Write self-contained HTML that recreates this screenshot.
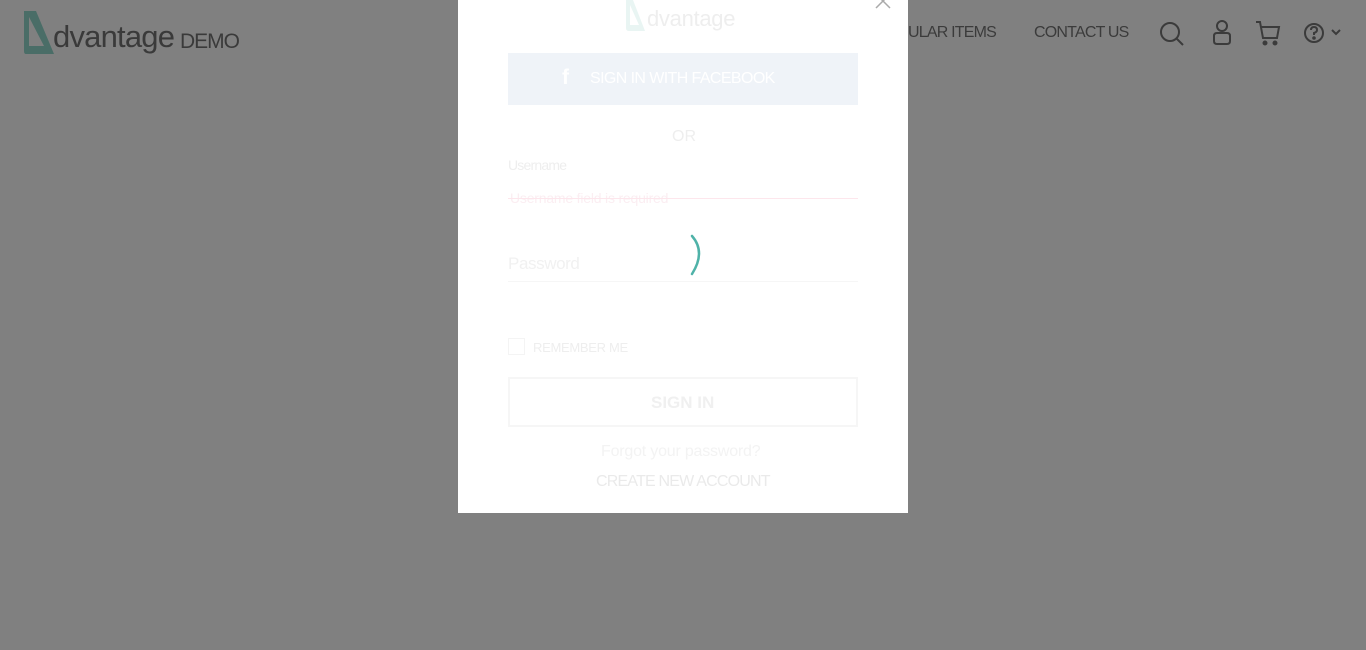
<!DOCTYPE html>
<html><head><meta charset="utf-8"><style>
html,body{margin:0;padding:0;width:1366px;height:650px;overflow:hidden;background:#808080;font-family:"Liberation Sans",sans-serif;}
.abs{position:absolute;white-space:nowrap}
.nav{color:#3b3b3b;font-size:16px;top:24px;letter-spacing:-0.8px}
.modal{left:458px;top:0;width:450px;height:513px;background:#fff;}
.c{color:#eeeeee}
</style></head><body>
<svg class="abs" style="left:22px;top:9px" width="40" height="48" viewBox="0 0 40 48"><path d="M2 2 H14 L32 45 H4 Q2 45 2 42 Z M7 8 V37 H22 Z" fill="#4a6d67" fill-rule="evenodd"/></svg>
<div class="abs" style="left:53px;top:19px;font-size:31px;color:#3a3a3a;letter-spacing:-0.8px">dvantage</div>
<div class="abs" style="left:180px;top:30px;font-size:21px;color:#3a3a3a;letter-spacing:-1px">DEMO</div>
<div class="abs nav" style="left:908px">ULAR ITEMS</div>
<div class="abs nav" style="left:1034px">CONTACT US</div>
<svg class="abs" style="left:1158px;top:20px" width="28" height="28" viewBox="0 0 28 28" fill="none" stroke="#3b3b3b" stroke-width="2"><circle cx="12" cy="12" r="9"/><path d="M18.5 18.5 L25 25"/></svg>
<svg class="abs" style="left:1210px;top:19px" width="24" height="28" viewBox="0 0 24 28" fill="none" stroke="#3b3b3b" stroke-width="2"><circle cx="12" cy="7" r="5"/><path d="M4 17 Q4 14 7 14 H17 Q20 14 20 17 V22 Q20 25 17 25 H7 Q4 25 4 22 Z"/></svg>
<svg class="abs" style="left:1255px;top:20px" width="26" height="26" viewBox="0 0 26 26" fill="none" stroke="#3b3b3b" stroke-width="2"><path d="M1 2 H5 L8 18 H22 L24 7 H6"/><circle cx="10" cy="23" r="1.5" fill="#3b3b3b"/><circle cx="20" cy="23" r="1.5" fill="#3b3b3b"/></svg>
<svg class="abs" style="left:1302px;top:21px" width="42" height="24" viewBox="0 0 42 24" fill="none" stroke="#3b3b3b" stroke-width="2"><circle cx="12" cy="12" r="9"/><path d="M9 9 Q9 6 12 6 Q15 6 15 9 Q15 11 12 12 V14"/><circle cx="12" cy="17" r="0.8" fill="#3b3b3b"/><path d="M30 9 L34 13 L38 9"/></svg>

<div class="abs modal">
  <svg class="abs" style="left:168px;top:0" width="22" height="32" viewBox="0 0 22 32"><path d="M0 0 H7 L19 31 H3 Q0 31 0 28 Z M4 5 V25 H13 Z" fill="#e9f5f3" fill-rule="evenodd"/></svg>
  <div class="abs" style="left:189px;top:6px;font-size:22px;color:#eeeeee;letter-spacing:-0.3px">dvantage</div>
  <svg class="abs" style="left:416px;top:0" width="20" height="10" viewBox="0 0 20 10" stroke="#aaa" stroke-width="1.5"><path d="M2 -6 L16 8 M16 -6 L2 8"/></svg>
  <div class="abs" style="left:50px;top:53px;width:350px;height:52px;background:#eff3f8"></div>
  <div class="abs" style="left:104px;top:66px;font-size:21px;color:#fff;font-weight:bold">f</div>
  <div class="abs" style="left:132px;top:70px;font-size:16px;color:#fff;letter-spacing:-0.6px">SIGN IN WITH FACEBOOK</div>
  <div class="abs c" style="left:214px;top:128px;font-size:16px">OR</div>
  <div class="abs c" style="left:50px;top:157px;font-size:14px;letter-spacing:-0.8px">Username</div>
  <div class="abs" style="left:52px;top:190px;font-size:14px;color:#fbeef2;letter-spacing:-0.2px">Username field is required</div>
  <div class="abs" style="left:50px;top:198px;width:350px;height:1px;background:#fde6ec"></div>
  <div class="abs c" style="left:50px;top:254px;font-size:17px;color:#f1f1f1;letter-spacing:-0.4px">Password</div>
  <div class="abs" style="left:50px;top:281px;width:350px;height:1px;background:#f6f6f6"></div>
  <svg class="abs" style="left:220px;top:230px" width="30" height="50" viewBox="0 0 30 50" fill="none"><path d="M14 6 Q28 22 14 44" stroke="#4fb2a8" stroke-width="2.5" stroke-linecap="round"/></svg>
  <div class="abs" style="left:50px;top:338px;width:15px;height:15px;border:1px solid #f4f4f4"></div>
  <div class="abs c" style="left:75px;top:340px;font-size:13px;letter-spacing:-0.3px">REMEMBER ME</div>
  <div class="abs" style="left:50px;top:377px;width:346px;height:46px;border:2px solid #f6f6f6"></div>
  <div class="abs" style="left:193px;top:393px;font-size:17px;color:#f0f0f0;font-weight:bold">SIGN IN</div>
  <div class="abs" style="left:143px;top:443px;font-size:16px;color:#f3f3f3;letter-spacing:-0.2px">Forgot your password?</div>
  <div class="abs" style="left:138px;top:473px;font-size:16px;color:#eaeaea;letter-spacing:-0.8px">CREATE NEW ACCOUNT</div>
</div>
</body></html>
